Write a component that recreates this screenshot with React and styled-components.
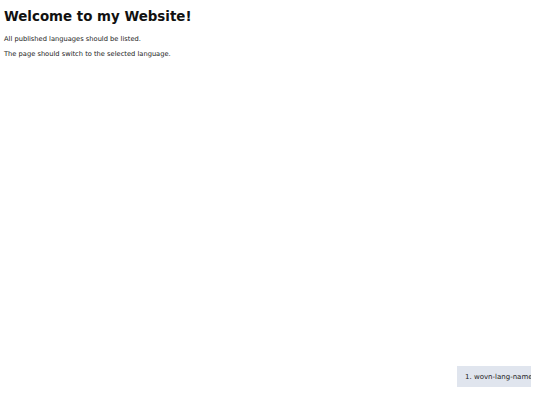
import React from "react";
import styled, { createGlobalStyle } from "styled-components";

const Global = createGlobalStyle`
  html, body { margin: 0; padding: 0; background: #fff; }
  body { font-family: "DejaVu Sans", Verdana, sans-serif; color: #000; }
`;

const Page = styled.main`
  padding: 4px 4px;
  width: 540px;
  height: 405px;
  box-sizing: border-box;
  position: relative;
`;

const Title = styled.h1`
  margin: 5px 0 10px;
  font-size: 13.4px;
  font-weight: bold;
  line-height: 16px;
  color: #111;
`;

const Text = styled.p`
  margin: 0 0 7px;
  font-size: 6.7px;
  line-height: 8px;
  color: #222;
`;

const Widget = styled.div`
  position: absolute;
  right: 9px;
  bottom: 18px;
  width: 74px;
  height: 21px;
  background: #e0e5ee;
  overflow: hidden;
  display: flex;
  align-items: center;
`;

const LangList = styled.ol`
  margin: 0;
  padding: 0 0 0 8px;
  list-style: decimal inside;
  white-space: nowrap;
  font-size: 7px;
  color: #222;
`;

export default function App() {
  return (
    <>
      <Global />
      <Page>
        <Title>Welcome to my Website!</Title>
        <Text>All published languages should be listed.</Text>
        <Text>The page should switch to the selected language.</Text>
        <Widget>
          <LangList>
            <li>wovn-lang-name</li>
          </LangList>
        </Widget>
      </Page>
    </>
  );
}
